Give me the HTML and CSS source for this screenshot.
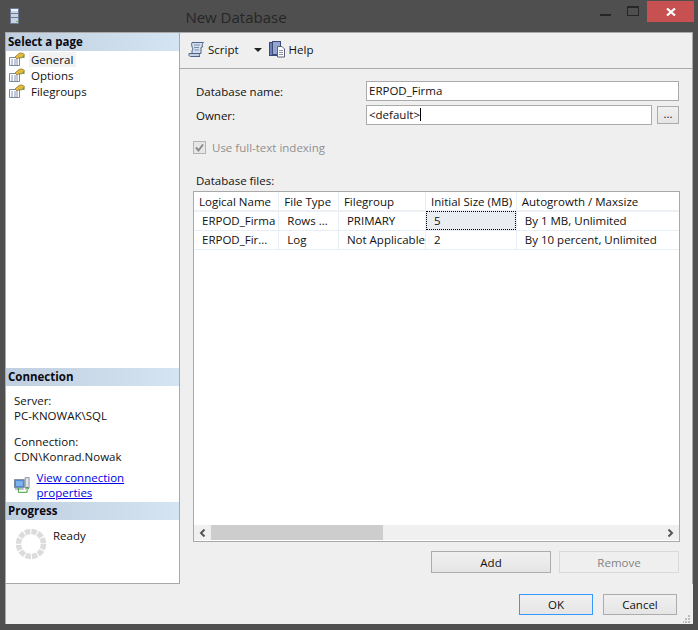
FILE: index.html
```html
<!DOCTYPE html>
<html lang="en">
<head>
    <meta charset="UTF-8">
    <meta name="viewport" content="width=device-width, initial-scale=1.0">
    <title>New Database</title>
    <link rel="stylesheet" href="styles.css">
</head>
<body>
    <div class="window">
        <!-- Title bar -->
        <div class="titlebar">
            <svg class="app-icon" width="10" height="16" viewBox="0 0 10 16">
                <rect x="0.5" y="0.5" width="8" height="15" fill="#c9d3e3" stroke="#6d7c94"/>
                <rect x="1" y="1" width="7" height="2" fill="#eef2f8"/>
                <rect x="1" y="5" width="7" height="1" fill="#6d7c94"/>
                <rect x="1" y="9" width="7" height="1" fill="#6d7c94"/>
                <rect x="6" y="13" width="2" height="1" fill="#6fc04a"/>
            </svg>
            <div class="title">New Database</div>
            <div class="win-min"></div>
            <div class="win-max"></div>
            <div class="win-close">
                <svg width="10" height="8" viewBox="0 0 10 8"><path d="M1 0.5L9 7.5M9 0.5L1 7.5" stroke="#fff" stroke-width="2.2"/></svg>
            </div>
        </div>

        <div class="client">
            <div class="main">
                <!-- Left panel -->
                <div class="sidebar">
                    <div class="panel panel-pages">
                        <div class="panel-head">Select a page</div>
                        <div class="page-list">
                            <div class="page-item">
                                <svg class="page-icon" width="16" height="14" viewBox="0 0 16 14"><use href="#pg"/></svg>
                                <span class="page-label active">General</span>
                            </div>
                            <div class="page-item">
                                <svg class="page-icon" width="16" height="14" viewBox="0 0 16 14"><use href="#pg"/></svg>
                                <span class="page-label">Options</span>
                            </div>
                            <div class="page-item">
                                <svg class="page-icon" width="16" height="14" viewBox="0 0 16 14"><use href="#pg"/></svg>
                                <span class="page-label">Filegroups</span>
                            </div>
                        </div>
                    </div>
                    <div class="panel panel-conn">
                        <div class="panel-head">Connection</div>
                        <div class="conn-body">
                            <div>Server:</div>
                            <div>PC-KNOWAK\SQL</div>
                            <div class="conn-gap">Connection:</div>
                            <div>CDN\Konrad.Nowak</div>
                            <div class="conn-link">
                                <svg width="17" height="16" viewBox="0 0 17 16">
                                    <rect x="0.5" y="2.5" width="10" height="8" fill="#4a86d8" stroke="#7a8aa0"/>
                                    <rect x="2" y="4" width="7" height="5" fill="#7fb4ee"/>
                                    <rect x="11.5" y="0.5" width="4" height="10" fill="#dfe3ea" stroke="#8a93a3"/>
                                    <rect x="1" y="11" width="9" height="2" fill="#b4bcc8"/>
                                    <path d="M4.5 11V15.5H13.5V11M11.5 12.5L13.5 10L15.5 12.5" fill="none" stroke="#3f9a35"/>
                                </svg>
                                <a href="#">View connection properties</a>
                            </div>
                        </div>
                    </div>
                    <div class="panel panel-progress">
                        <div class="panel-head">Progress</div>
                        <div class="progress-body">
                            <svg width="32" height="32" viewBox="0 0 32 32">
                                <circle cx="16" cy="16" r="12.5" fill="none" stroke="#dcdcdc" stroke-width="5.5" stroke-dasharray="5.4 1.15"/>
                            </svg>
                            <span>Ready</span>
                        </div>
                    </div>
                </div>

                <!-- Right panel -->
                <div class="content">
                    <div class="toolbar">
                        <svg width="17" height="17" viewBox="0 0 17 17">
                            <path d="M4 1.5H15.5C14 2.5 14 5 14.5 6L13 6.5V12.5H4.5C3.5 11 4 9 5 8C4 6 3 3.5 4 1.5Z" fill="#d6dfec" stroke="#4f6488"/>
                            <path d="M1 12.5H12C11 13.5 11 15 12 15.5H2.5C1.2 15.5 .5 13.8 1 12.5Z" fill="#c5d1e3" stroke="#4f6488"/>
                            <path d="M6 4H12M6 6.5H11M6.5 9H11" stroke="#7b8cab"/>
                        </svg>
                        <span class="tool-label">Script</span>
                        <span class="tool-arrow"></span>
                        <svg class="help-icon" width="17" height="17" viewBox="0 0 17 17">
                            <rect x="0.5" y="1.5" width="9" height="13" fill="#6b7fb5" stroke="#3c4a78"/>
                            <rect x="3.5" y="0.5" width="8" height="13" fill="#94a5d0" stroke="#3c4a78"/>
                            <path d="M8.5 5.5H13L15.5 8V16H8.5Z" fill="#fff" stroke="#59607a"/>
                            <path d="M10 9.5H14M10 11.5H14M10 13.5H14" stroke="#8a90a5"/>
                        </svg>
                        <span class="tool-label">Help</span>
                    </div>

                    <div class="form">
                        <div class="form-row">
                            <label class="form-label">Database name:</label>
                            <div class="text-box">ERPOD_Firma</div>
                        </div>
                        <div class="form-row form-row-owner">
                            <label class="form-label">Owner:</label>
                            <div class="text-box owner-box">&lt;default&gt;<span class="caret"></span></div>
                            <div class="browse-btn">...</div>
                        </div>
                        <div class="check-row">
                            <svg width="13" height="13" viewBox="0 0 13 13">
                                <rect x="0.5" y="0.5" width="12" height="12" fill="#e6e6e6" stroke="#b4b4b4"/>
                                <path d="M3 6.5L5.5 9.5L10 3.5" fill="none" stroke="#8a8a8a" stroke-width="2"/>
                            </svg>
                            <span>Use full-text indexing</span>
                        </div>
                        <div class="files-label">Database files:</div>

                        <div class="grid">
                            <table class="files">
                                <colgroup>
                                    <col class="c1"><col class="c2"><col class="c3"><col class="c4"><col>
                                </colgroup>
                                <thead>
                                    <tr>
                                        <th>Logical Name</th>
                                        <th>File Type</th>
                                        <th>Filegroup</th>
                                        <th>Initial Size (MB)</th>
                                        <th>Autogrowth / Maxsize</th>
                                    </tr>
                                </thead>
                                <tbody>
                                    <tr>
                                        <td>ERPOD_Firma</td>
                                        <td>Rows ...</td>
                                        <td>PRIMARY</td>
                                        <td class="selected">5</td>
                                        <td>By 1 MB, Unlimited</td>
                                    </tr>
                                    <tr>
                                        <td>ERPOD_Fir...</td>
                                        <td>Log</td>
                                        <td>Not Applicable</td>
                                        <td>2</td>
                                        <td>By 10 percent, Unlimited</td>
                                    </tr>
                                </tbody>
                            </table>
                            <div class="scrollbar">
                                <div class="scroll-arrow">
                                    <svg width="7" height="8" viewBox="0 0 7 8"><path d="M5.5 0.5L2 4L5.5 7.5" fill="none" stroke="#555" stroke-width="2"/></svg>
                                </div>
                                <div class="scroll-thumb"></div>
                                <div class="scroll-track"></div>
                                <div class="scroll-arrow">
                                    <svg width="7" height="8" viewBox="0 0 7 8"><path d="M1.5 0.5L5 4L1.5 7.5" fill="none" stroke="#555" stroke-width="2"/></svg>
                                </div>
                            </div>
                        </div>

                        <div class="grid-buttons">
                            <div class="btn btn-wide">Add</div>
                            <div class="btn btn-wide btn-disabled">Remove</div>
                        </div>
                    </div>
                </div>
            </div>

            <div class="footer">
                <div class="btn btn-small btn-default">OK</div>
                <div class="btn btn-small">Cancel</div>
                <svg class="grip" width="8" height="8" viewBox="0 0 8 8" fill="#bdbdbd">
                    <rect x="5" y="0" width="2" height="2"/><rect x="2" y="3" width="2" height="2"/><rect x="5" y="3" width="2" height="2"/>
                    <rect x="-1" y="6" width="2" height="2"/><rect x="2" y="6" width="2" height="2"/><rect x="5" y="6" width="2" height="2"/>
                </svg>
            </div>
        </div>
    </div>

    <!-- Shared page icon -->
    <svg width="0" height="0" class="defs">
        <defs>
            <g id="pg">
                <path d="M0.5 5.5H10.5V13.5H0.5Z" fill="#fff" stroke="#7d8797"/>
                <path d="M2 8H4M5 8H9M2 10H4M5 10H9M2 12H4M5 12H9" stroke="#7f93b4"/>
                <path d="M6 5L10 1.5C11.5 0.5 14 1 15.5 2.5L13 6L10 5.5L8 7Z" fill="#e6b93a" stroke="#8c7a2c" stroke-width="0.8"/>
                <path d="M13 5.5L15.5 3V6Z" fill="#4d9a3c"/>
            </g>
        </defs>
    </svg>
</body>
</html>
```

FILE: styles.css
```css
* {
    box-sizing: border-box;
}
html, body {
    margin: 0;
    padding: 0;
}
body {
    background-color: #4f4f4f;
    color: #111;
    font-family: "Open Sans", "Noto Sans", sans-serif;
    font-size: 11.5px;
    line-height: 15px;
}
.defs {
    display: block;
}
.window {
    display: flex;
    flex-direction: column;
    width: 698px;
    height: 630px;
    padding: 0 5px 6px 5px;
}

/* Title bar */
.titlebar {
    display: flex;
    align-items: flex-start;
    height: 32px;
    flex: none;
}
.app-icon {
    margin: 8px 0 0 5px;
}
.title {
    flex: 1;
    margin-top: 8px;
    padding-left: 0;
    padding-right: 148px;
    text-align: center;
    color: #262626;
    font-size: 15px;
    line-height: 18px;
}
.win-min {
    width: 11px;
    height: 2px;
    margin: 14px 16px 0 0;
    background: #262626;
}
.win-max {
    width: 12px;
    height: 10px;
    margin: 6px 8px 0 0;
    border: 1px solid #262626;
    border-top-width: 2px;
}
.win-close {
    display: flex;
    align-items: center;
    justify-content: center;
    width: 47px;
    height: 21px;
    margin: 1px -1px 0 0;
    background: #c75050;
}

/* Client area */
.client {
    flex: 1;
    display: flex;
    flex-direction: column;
    background: #efefef;
    border-top: 1px solid #a9a9a9;
    border-left: 1px solid #a9a9a9;
}
.main {
    flex: 1;
    display: flex;
    min-height: 0;
}
.sidebar {
    display: flex;
    flex-direction: column;
    width: 174px;
    background: #fff;
    border-right: 1px solid #a9a9a9;
    border-bottom: 1px solid #a9a9a9;
}
.panel-pages {
    flex: 1;
}
.panel-conn {
    height: 134px;
}
.panel-progress {
    height: 81px;
}
.panel-head {
    height: 18px;
    padding-left: 2px;
    background: linear-gradient(to right, #bfcfdf, #d5e4f2);
    color: #0a0a14;
    font-weight: 700;
    line-height: 18px;
}
.page-list {
    padding-top: 0;
}
.page-item {
    display: flex;
    align-items: center;
    height: 16px;
    padding-left: 3px;
}
.page-icon {
    flex: none;
}
.page-label {
    margin-left: 4px;
    padding: 0 3px 0 2px;
}
.page-label.active {
    background: #f2f2f2;
}
.conn-body {
    padding: 7px 0 0 8px;
}
.conn-gap {
    margin-top: 11px;
}
.conn-link {
    display: flex;
    align-items: center;
    gap: 6px;
    margin-top: 6px;
}
.conn-link a {
    color: #0000e6;
}
.progress-body {
    display: flex;
    align-items: flex-start;
    padding: 8px 0 0 9px;
}
.progress-body span {
    margin: 0 0 0 6px;
}

/* Right side */
.content {
    flex: 1;
    display: flex;
    flex-direction: column;
    min-width: 0;
}
.toolbar {
    display: flex;
    align-items: center;
    height: 36px;
    flex: none;
    padding: 0 0 2px 8px;
    border-bottom: 1px solid #a9a9a9;
    border-right: 1px solid #a9a9a9;
}
.tool-label {
    margin-left: 3px;
}
.tool-arrow {
    width: 0;
    height: 0;
    margin: 0 7px 0 15px;
    border-left: 4px solid transparent;
    border-right: 4px solid transparent;
    border-top: 4px solid #222;
}
.form {
    flex: 1;
    display: flex;
    flex-direction: column;
    padding: 12px 13px 0 13px;
    border-right: 1px solid #a9a9a9;
}
.form-row {
    display: flex;
    align-items: center;
    height: 20px;
}
.form-row-owner {
    margin-top: 4px;
}
.form-label {
    width: 173px;
    padding-left: 3px;
}
.text-box {
    flex: 1;
    height: 20px;
    padding-left: 2px;
    background: #fff;
    border: 1px solid #ababab;
    line-height: 17px;
}
.owner-box {
    flex: none;
    width: 286px;
}
.caret {
    display: inline-block;
    width: 1px;
    height: 13px;
    vertical-align: -2px;
    background: #000;
}
.browse-btn {
    width: 22px;
    height: 18px;
    margin-left: 5px;
    background: linear-gradient(#f0f0f0, #e5e5e5);
    border: 1px solid #acacac;
    text-align: center;
    line-height: 13px;
}
.check-row {
    display: flex;
    align-items: center;
    gap: 6px;
    margin-top: 15px;
    color: #8f8f8f;
}
.files-label {
    margin-top: 18px;
    padding-left: 3px;
    height: 16px;
}
.grid {
    display: flex;
    flex-direction: column;
    width: 487px;
    height: 351px;
    margin-top: 2px;
    background: #fff;
    border: 1px solid #a9a9a9;
}
.files {
    flex: 1;
    display: block;
    border-collapse: collapse;
    table-layout: fixed;
    width: 485px;
}
.files thead, .files tbody {
    display: table-row-group;
}
.c1 { width: 85px; }
.c2 { width: 60px; }
.c3 { width: 85px; }
.c4 { width: 91px; }
.files th {
    height: 19px;
    padding: 0 0 0 5px;
    font-weight: 400;
    text-align: left;
    background: #fff;
    border-right: 1px solid #e8eef5;
    border-bottom: 2px solid #edf1f6;
    white-space: nowrap;
}
.files th:last-child, .files td:last-child {
    width: 164px;
    border-right: none;
}
.files td {
    height: 19px;
    padding: 0 0 0 8px;
    border-right: 1px solid #e8eef5;
    border-bottom: 1px solid #e8eef5;
    white-space: nowrap;
}
.files td.selected {
    background: #e9edf1;
    outline: 1px dotted #000;
    outline-offset: -1px;
}
.scrollbar {
    display: flex;
    flex: none;
    height: 15px;
    margin-bottom: 1px;
    background: #f0f0f0;
}
.scroll-arrow {
    display: flex;
    align-items: center;
    justify-content: center;
    width: 17px;
}
.scroll-thumb {
    width: 172px;
    background: #cdcdcd;
}
.scroll-track {
    flex: 1;
}
.grid-buttons {
    display: flex;
    justify-content: flex-end;
    gap: 8px;
    margin-top: 9px;
}

/* Buttons */
.btn {
    display: flex;
    align-items: center;
    justify-content: center;
    background: linear-gradient(#f0f0f0, #e5e5e5);
    border: 1px solid #acacac;
}
.btn-wide {
    width: 120px;
    height: 22px;
}
.btn-disabled {
    background: #efefef;
    border-color: #d9d9d9;
    color: #838383;
}
.btn-small {
    width: 74px;
    height: 21px;
}
.btn-default {
    border-color: #3399ff;
}

/* Footer */
.footer {
    position: relative;
    display: flex;
    justify-content: flex-end;
    gap: 10px;
    height: 40px;
    flex: none;
    padding: 10px 16px 0 0;
}
.grip {
    position: absolute;
    right: 2px;
    bottom: 1px;
}
```
